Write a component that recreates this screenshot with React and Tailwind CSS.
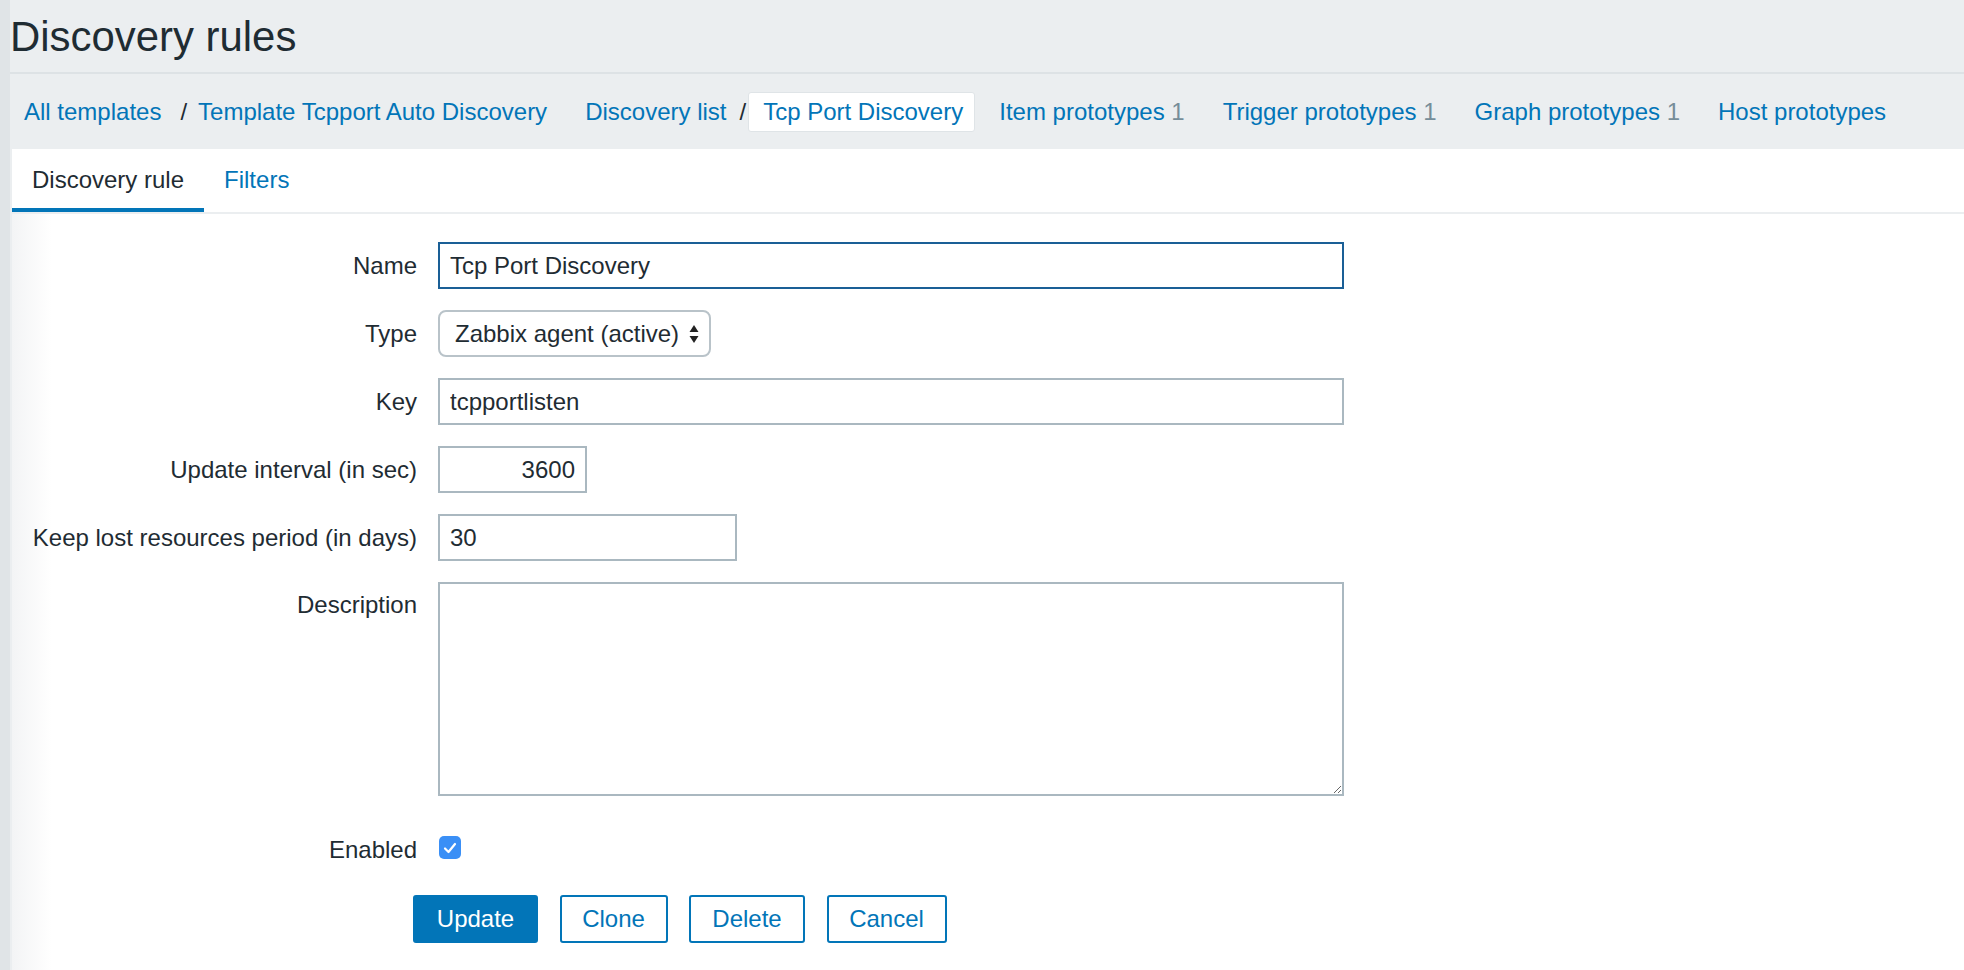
import React from "react";

const FONT = { fontFamily: '"Liberation Sans", Arial, Helvetica, sans-serif' };

function Crumb({ children, className = "" }) {
  return <span className={"text-[#0275b8] whitespace-nowrap " + className}>{children}</span>;
}

function Row({ label, children, top = false }) {
  return (
    <div className={"flex gap-[21px] " + (top ? "items-start" : "items-center")}>
      <div className={"w-[405px] shrink-0 text-right text-[#1f2c33] " + (top ? "pt-[5px]" : "")}>{label}</div>
      {children}
    </div>
  );
}

export default function App() {
  const inputCls =
    "h-[47px] border-2 bg-white px-[10px] text-[24px] text-[#1f2c33] outline-none leading-none";
  return (
    <div className="flex min-h-[970px] w-full bg-[#ebeef0] text-[24px]" style={FONT}>
      <div className="w-[10px] shrink-0 bg-[#e0e4e7]" />
      <div className="flex min-w-0 flex-1 flex-col">
        {/* Title */}
        <div className="flex h-[74px] items-center border-b-2 border-[#dde2e5]">
          <h1 className="pt-[2px] text-[41.9px] font-normal leading-none text-[#1f2c33]">Discovery rules</h1>
        </div>

        {/* Breadcrumbs */}
        <div className="flex h-[75px] items-center pl-[14px] pt-[1px]">
          <Crumb>All templates</Crumb>
          <span className="ml-[19px] text-[#1f2c33]">/</span>
          <Crumb className="ml-[11px]">Template Tcpport Auto Discovery</Crumb>
          <Crumb className="ml-[38px]">Discovery list</Crumb>
          <span className="ml-[13px] text-[#1f2c33]">/</span>
          <div className="ml-[2px] flex h-[40px] items-center rounded-[3px] border border-[#dfe4e7] bg-white pl-[14px] pr-[11px]">
            <Crumb>Tcp Port Discovery</Crumb>
          </div>
          <Crumb className="ml-[24px]">
            Item prototypes <span className="text-[#768d99]">1</span>
          </Crumb>
          <Crumb className="ml-[38px]">
            Trigger prototypes <span className="text-[#768d99]">1</span>
          </Crumb>
          <Crumb className="ml-[38px]">
            Graph prototypes <span className="text-[#768d99]">1</span>
          </Crumb>
          <Crumb className="ml-[38px]">Host prototypes</Crumb>
        </div>

        {/* White panel */}
        <div className="ml-[2px] flex flex-1 flex-col bg-white">
          {/* Tabs */}
          <div className="flex h-[65px] border-b-2 border-[#ebeef0]">
            <div className="flex flex-col">
              <div className="flex flex-1 items-center px-[20px] pt-[3px] text-[#1f2c33]">Discovery rule</div>
              <div className="h-[4px] bg-[#0275b8]" />
            </div>
            <div className="flex flex-col">
              <div className="flex flex-1 items-center px-[20px] pt-[3px] text-[#0275b8]">Filters</div>
              <div className="h-[4px]" />
            </div>
          </div>

          {/* Form */}
          <div className="flex flex-1 flex-col gap-[21px] bg-[linear-gradient(to_right,#f3f4f5,#ffffff_40px)] pt-[28px]">
            <Row label="Name">
              <input
                autoFocus
                className={inputCls + " w-[906px] border-[#1a5f96] caret-[#1f2c33]"}
                defaultValue="Tcp Port Discovery"
                onFocus={(e) => e.target.setSelectionRange(0, 0)}
              />
            </Row>
            <Row label="Type">
              <div className="flex h-[47px] w-[273px] items-center justify-between rounded-[8px] border-2 border-[#b9c3c9] bg-white pl-[15px] pr-[10px] text-[#1f2c33]">
                <span className="whitespace-nowrap">Zabbix agent (active)</span>
                <svg width="10" height="20" viewBox="0 0 10 20" className="shrink-0">
                  <polygon points="5,1 9.5,8 0.5,8" fill="#222" />
                  <polygon points="0.5,12 9.5,12 5,19" fill="#222" />
                </svg>
              </div>
            </Row>
            <Row label="Key">
              <input className={inputCls + " w-[906px] border-[#aab8c0]"} defaultValue="tcpportlisten" />
            </Row>
            <Row label="Update interval (in sec)">
              <input className={inputCls + " w-[149px] border-[#aab8c0] text-right"} defaultValue="3600" />
            </Row>
            <Row label="Keep lost resources period (in days)">
              <input className={inputCls + " w-[299px] border-[#aab8c0]"} defaultValue="30" />
            </Row>
            <Row label="Description" top>
              <textarea className="h-[214px] w-[906px] border-2 border-[#aab8c0] bg-white px-[10px] py-[8px] text-[24px] text-[#1f2c33] outline-none" />
            </Row>
            <div className="mt-[19px] flex h-[23px] items-center gap-[21px]">
              <div className="w-[405px] shrink-0 pt-[4px] text-right text-[#1f2c33]">Enabled</div>
              <div className="ml-[1px] flex h-[23px] w-[22px] items-center justify-center rounded-[5px] bg-[#3a8ff6]">
                <svg width="14" height="12" viewBox="0 0 14 12">
                  <path d="M2 6.5 L5.5 10 L12 2" stroke="#fff" strokeWidth="2.2" fill="none" strokeLinecap="round" strokeLinejoin="round" />
                </svg>
              </div>
            </div>
            <div className="mt-[15px] flex gap-[21.5px] pl-[401px]">
              <button className="h-[48px] w-[125px] rounded-[3px] border-2 border-[#0275b8] bg-[#0275b8] text-[24px] text-white">
                Update
              </button>
              <button className="h-[48px] w-[108px] rounded-[3px] border-2 border-[#0275b8] bg-white text-[24px] text-[#0275b8]">
                Clone
              </button>
              <button className="h-[48px] w-[116px] rounded-[3px] border-2 border-[#0275b8] bg-white text-[24px] text-[#0275b8]">
                Delete
              </button>
              <button className="h-[48px] w-[120px] rounded-[3px] border-2 border-[#0275b8] bg-white text-[24px] text-[#0275b8]">
                Cancel
              </button>
            </div>
          </div>
        </div>
      </div>
    </div>
  );
}
